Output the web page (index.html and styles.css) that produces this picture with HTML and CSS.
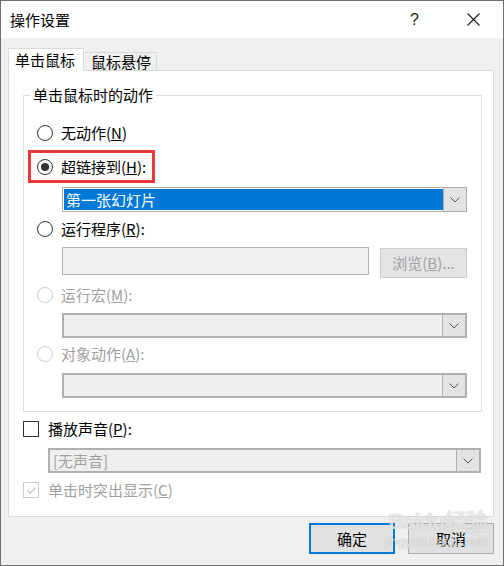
FILE: index.html
```html
<!DOCTYPE html>
<html lang="zh-CN">
<head>
<meta charset="utf-8">
<title>操作设置</title>
<link rel="stylesheet" href="styles.css">
</head>
<body>
<div class="window">
  <div class="titlebar">
    <span class="title">操作设置</span>
    <span class="help">?</span>
    <span class="close"><svg width="13" height="13" viewBox="0 0 13 13"><path d="M0.5 0.5L12.5 12.5M12.5 0.5L0.5 12.5" stroke="#1a1a1a" stroke-width="1.1" fill="none"/></svg></span>
  </div>
  <div class="body">
    <div class="tabs">
      <div class="tab active">单击鼠标</div>
      <div class="tab">鼠标悬停</div>
    </div>
    <div class="panel">
      <div class="group">
        <div class="legend">单击鼠标时的动作</div>
        <div class="row r1"><span class="radio"></span><span class="label">无动作(<u>N</u>)</span></div>
        <div class="row r2 highlight"><span class="radio checked"></span><span class="label">超链接到(<u>H</u>):</span></div>
        <div class="combo selected c1">
          <span class="value"><span class="sel">第一张幻灯片</span></span>
          <span class="drop"><svg width="10" height="6" viewBox="0 0 10 6"><path d="M0.5 0.5L5 5L9.5 0.5" stroke="#555" stroke-width="1" fill="none"/></svg></span>
        </div>
        <div class="row r3"><span class="radio"></span><span class="label">运行程序(<u>R</u>):</span></div>
        <div class="filerow">
          <span class="textbox"></span>
          <span class="btn disabled">浏览(<u>B</u>)...</span>
        </div>
        <div class="row r4 disabled"><span class="radio"></span><span class="label">运行宏(<u>M</u>):</span></div>
        <div class="combo c2">
          <span class="value"></span>
          <span class="drop"><svg width="10" height="6" viewBox="0 0 10 6"><path d="M0.5 0.5L5 5L9.5 0.5" stroke="#555" stroke-width="1" fill="none"/></svg></span>
        </div>
        <div class="row r5 disabled"><span class="radio"></span><span class="label">对象动作(<u>A</u>):</span></div>
        <div class="combo c3">
          <span class="value"></span>
          <span class="drop"><svg width="10" height="6" viewBox="0 0 10 6"><path d="M0.5 0.5L5 5L9.5 0.5" stroke="#555" stroke-width="1" fill="none"/></svg></span>
        </div>
      </div>
      <div class="row cb1"><span class="checkbox"></span><span class="label">播放声音(<u>P</u>):</span></div>
      <div class="combo c4">
        <span class="value">[无声音]</span>
        <span class="drop"><svg width="10" height="6" viewBox="0 0 10 6"><path d="M0.5 0.5L5 5L9.5 0.5" stroke="#555" stroke-width="1" fill="none"/></svg></span>
      </div>
      <div class="row cb2 disabled"><span class="checkbox checked"><svg width="13" height="13" viewBox="0 0 13 13"><path d="M2.5 6.5L5.2 9.2L10.5 3.5" stroke="#c4c4c4" stroke-width="1.2" fill="none"/></svg></span><span class="label">单击时突出显示(<u>C</u>)</span></div>
    </div>
    <div class="buttons">
      <span class="btn default">确定</span>
      <span class="btn">取消</span>
    </div>
  </div>
  <div class="watermark"><span class="wm-logo">Bai<span class="paw">du</span>经验</span><span class="wm-url">jingyan.baidu.com</span></div>
</div>
</body>
</html>
```

FILE: styles.css
```css
* { box-sizing: border-box; }
html, body { margin: 0; padding: 0; }
body {
  width: 504px;
  height: 566px;
  font-family: "Noto Sans CJK SC", "Noto Sans", sans-serif;
  font-size: 15px;
  color: #000;
  background: #fff;
}
.window {
  position: relative;
  width: 504px;
  height: 566px;
  border: 1px solid #6e6e6e;
  background: #f0f0f0;
  display: flex;
  flex-direction: column;
}
.titlebar {
  height: 37px;
  background: #fff;
  display: flex;
  align-items: center;
  padding-left: 9px;
}
.title { font-size: 15px; line-height: 20px; flex: 1; }
.help { font-family: "Liberation Sans", sans-serif; font-size: 16px; color: #222; margin-right: 48px; }
.close { width: 13px; height: 13px; display: flex; margin-right: 23px; }
.body {
  padding: 10px 9px 0 7px;
  display: flex;
  flex-direction: column;
}
.tabs {
  display: flex;
  align-items: flex-end;
  height: 22px;
}
.tab {
  position: relative;
  height: 18px;
  width: 74px;
  margin-left: -1px;
  border: 1px solid #d9d9d9;
  border-bottom: none;
  background: #f0f0f0;
  font-size: 15px;
  line-height: 18px;
  padding-left: 7px;
}
.tab.active {
  z-index: 1;
  height: 23px;
  width: 76px;
  margin-left: 0;
  margin-bottom: -1px;
  background: #fff;
  line-height: 22px;
  padding-left: 6px;
}
.panel {
  width: 486px;
  height: 447px;
  border: 1px solid #d9d9d9;
  background: #fff;
  padding: 24px 0 0 14px;
}
.group {
  position: relative;
  width: 459px;
  height: 317px;
  border: 1px solid #dcdcdc;
  padding: 27px 0 0 13px;
}
.legend {
  position: absolute;
  left: 6px;
  top: -11px;
  background: #fff;
  padding: 0 3px;
  line-height: 20px;
  font-size: 15px;
}
.row {
  display: flex;
  align-items: center;
  height: 20px;
  line-height: 20px;
}
.label { margin-left: 8px; white-space: nowrap; }
.row.disabled { color: #a0a0a0; }
.radio {
  width: 16px;
  height: 16px;
  border: 1px solid #333;
  border-radius: 50%;
  background: #fff;
  display: flex;
  align-items: center;
  justify-content: center;
  flex: none;
}
.radio.checked::after {
  content: "";
  width: 8px;
  height: 8px;
  border-radius: 50%;
  background: #333;
}
.row.disabled .radio { border-color: #cccccc; }
.highlight {
  width: fit-content;
  height: 33px;
  border: 3px solid #e8393b;
  margin-left: -9px;
  padding: 0 6px 0 6px;
  margin-top: 7px;
}
.combo {
  display: flex;
  height: 25px;
  border: 1px solid #adadad;
  background: #efefef;
  margin-left: 25px;
  width: 405px;
}
.combo .value {
  flex: 1;
  font-size: 15px;
  line-height: 21px;
  padding-left: 3px;
  color: #a0a0a0;
}
.combo .drop {
  width: 23px;
  border-left: 1px solid #adadad;
  background: #e3e3e3;
  display: flex;
  align-items: center;
  justify-content: center;
}
.combo.c2, .combo.c3, .combo.c4 { border-width: 2px; border-color: #b0b0b0; }
.combo.c2 .drop, .combo.c3 .drop, .combo.c4 .drop { border-left-color: #b0b0b0; }
.combo.selected {
  background: #fff;
  padding: 1px 0 1px 1px;
  margin-top: 4px;
}
.combo.selected .value {
  background: #0078d7;
  color: #fff;
  padding-left: 2px;
  line-height: 21px;
}
.combo.selected .drop { margin: -1px 0; }
.r3 { margin-top: 7px; }
.filerow {
  display: flex;
  align-items: flex-start;
  margin-top: 8px;
  margin-left: 25px;
  height: 31px;
}
.textbox {
  width: 307px;
  height: 28px;
  border: 1px solid #b4b4b4;
  background: #f0f0f0;
}
.btn {
  display: flex;
  align-items: center;
  justify-content: center;
  width: 86px;
  height: 31px;
  border: 1px solid #adadad;
  background: #e1e1e1;
  font-size: 15px;
  line-height: 20px;
}
.btn.disabled {
  margin-left: 11px;
  margin-top: 1px;
  width: 87px;
  height: 30px;
  border-color: #cccccc;
  background: #e4e4e4;
  color: #a0a0a0;
}
.btn.default { border: 2px solid #0078d7; }
.r4 { margin-top: 7px; }
.c2 { margin-top: 8px; }
.r5 { margin-top: 6px; }
.c3 { margin-top: 9px; }
.checkbox {
  width: 16px;
  height: 16px;
  border: 1px solid #333;
  background: #fff;
  flex: none;
  display: flex;
  align-items: center;
  justify-content: center;
}
.row.disabled .checkbox { border-color: #cccccc; }
.cb1 { margin-top: 7px; }
.cb1 .label, .cb2 .label { margin-left: 9px; }
.combo.c4 { margin-left: 25px; width: 433px; margin-top: 9px; }
.cb2 { margin-top: 7px; }
.buttons {
  display: flex;
  justify-content: flex-end;
  gap: 13px;
  margin-top: 6px;
}
.watermark {
  position: absolute;
  left: 384px;
  top: 504px;
  display: flex;
  flex-direction: column;
  align-items: center;
  color: rgba(255,255,255,0.7);
  text-shadow: 0 0 1px rgba(120,120,120,0.6);
  pointer-events: none;
}
.wm-logo { font-family: "Liberation Sans", "Noto Sans CJK SC", sans-serif; font-size: 22px; font-weight: bold; line-height: 26px; letter-spacing: -1px; margin-top: 4px; }
.wm-url { font-family: "Liberation Sans", sans-serif; font-size: 13px; line-height: 14px; }
```
